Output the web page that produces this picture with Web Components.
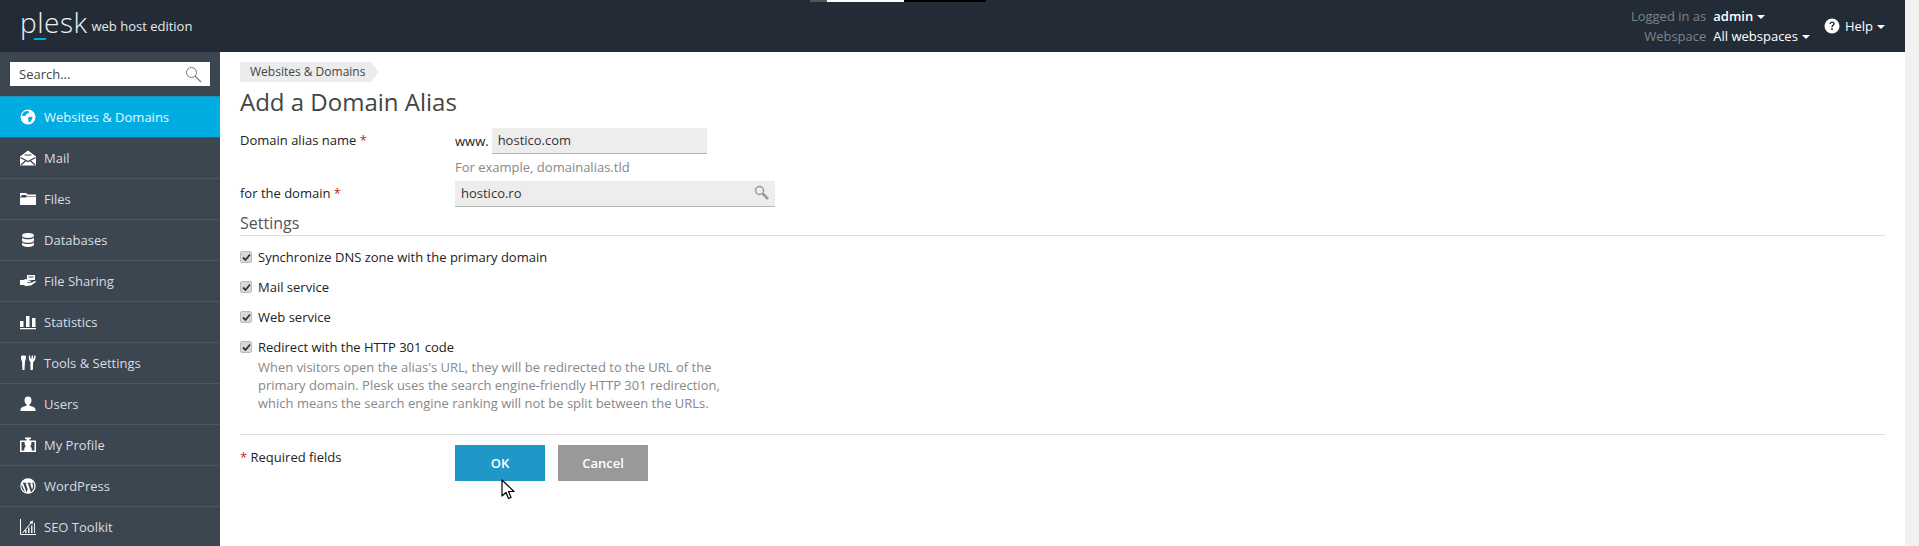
<!DOCTYPE html>
<html>
<head>
<meta charset="utf-8">
<title>Add a Domain Alias</title>
<style>
  html, body { margin: 0; height: 100%; overflow: hidden; background: #fff; }
  body { font: 13px/18px "Open Sans", sans-serif; color: #222; }
</style>
</head>
<body>
<plesk-app>
  <plesk-header></plesk-header>
  <plesk-sidebar slot="side"></plesk-sidebar>
  <plesk-form slot="main"></plesk-form>
</plesk-app>

<script>
const ICONS = {
  globe: '<circle cx="8" cy="8" r="7.5" fill="#fff"/><path d="M5 2.500c2-.8 3.500-.6 4 .3.500 1-1 1.600-2 2-1.200.5-.6 1.600-1.800 2C4 7.200 2.400 7 2 6c.4-1.500 1.600-3 3-3.500zM9 8c1.300-.5 3-.2 3.500.8.400 1-.8 1.700-1.300 2.700-.5 1-1.200 2-2.200 2-.8-.6-.4-1.800-.8-2.800C7.800 9.700 8 8.400 9 8z" fill="#00ade3"/>',
  mail: '<path d="M0 6.500 8 .5l8 6v9H0z" fill="#fff"/><path d="M.5 7.500 8 11.500l7.500-4M.8 15l5.200-4.500M15.200 15 10 10.500M4.500 5h7" fill="none" stroke="#3c4650" stroke-width="1.200"/>',
  folder: '<path d="M0 2h6l1.500 1.500H16v1.700H7L5.500 4H1.500v1.500H0z" fill="#fff"/><path d="M0 6.500h5.500L7 5.800h9V14H0z" fill="#fff"/>',
  db: '<path d="M2 3.500C2 1.800 4.500 1 8 1s6 .8 6 2.500S11.500 6 8 6 2 5.200 2 3.500zM2 5.800C3.200 7 5.500 7.300 8 7.300s4.800-.3 6-1.500v2.700C14 10 11.500 10.800 8 10.800S2 10 2 8.500zM2 10.600c1.200 1.200 3.500 1.500 6 1.500s4.800-.3 6-1.500v2C14 14.200 11.500 15 8 15s-6-.8-6-2.400z" fill="#fff"/>',
  share: '<path d="M7 2h8v5H7z" fill="#fff"/><path d="M8.500 3.500h5v1h-5z" fill="#3c4650"/><path d="M0 7h3l3-1 3 1.500h2.500L10 9H7v.8h4l4.500-1.800.5 1-5 3.500-5 .5L3 12H0z" fill="#fff"/>',
  stats: '<path d="M0 7h3.500v6H0zM6 2h3.500v11H6zM12 4h3.500v9H12zM0 14h16v1.200H0z" fill="#fff"/>',
  tools: '<path d="M1 1.500C1 .8 2 .5 3.500.5S6 .8 6 1.500c0 2-.2 3.500-1 5L4.500 15h-2L2 6.500c-.8-1.500-1-3-1-5zM9 .5h1.200l.3 3h1l.3-3H13l.3 3h.7l.2-3H15.500c.4 2.500-.2 5-2.300 6.500l-.4 8h-2.300L10.400 7C8.800 5.500 8.600 3 9 .5z" fill="#fff"/>',
  user: '<path d="M8 .5c2.300 0 3.500 1.700 3.500 3.800 0 1.700-.8 3.400-2 4.200v1.300c2.500.8 5.500 1.500 6 3.200v2H.5v-2c.5-1.700 3.500-2.400 6-3.200V8.500c-1.200-.8-2-2.500-2-4.200C4.500 2.200 5.700.5 8 .5z" fill="#fff"/>',
  profile: '<path d="M5 .5h6V2H9.500v1.500H16V15H0V3.500h6.500V2H5z" fill="#fff"/><path d="M1.500 5v8.500h2.800V11L5.800 9c-1-.7-1.200-2-1.200-3V5zM14.500 5v8.500h-2.800V11L10.200 9c1-.7 1.200-2 1.200-3V5z" fill="#3c4650"/>',
  wp: '<circle cx="8" cy="8" r="7.700" fill="#fff"/><path d="M1.700 6.500 5 14.200 2.800 12C1.800 10.800 1 8.200 1.700 6.500zM3 4.800h3.500v.6l-.8.2 2 6-1.200 3-3-8.600-.7-.2zM7.500 4.800H11v.6l-.9.2 2 6 .8-2.700c.4-1.400-.4-2.600-.5-3.300-.1-.8.300-1 .9-1.300 1 1.200 1.600 4.400.4 6.800L11 14.600 8.500 7l-.6-1.500-.4-.1z" fill="#3c4650"/>',
  seo: '<path d="M.5 0v15.500H16" fill="none" stroke="#fff" stroke-width="1"/><path d="M2.500 14 11 4" fill="none" stroke="#fff"/><path d="M9.500 3 13 1.500l-.5 4z" fill="#fff"/><path d="M5 14v-3h1.500v3zM8 14V8.500h1.500V14zM11 14V6.500h1.500V14zM14 14V4h1v10z" fill="#fff" opacity=".9"/>'
};

const MENU = [
  ['globe', 'Websites & Domains', true],
  ['mail', 'Mail'],
  ['folder', 'Files'],
  ['db', 'Databases'],
  ['share', 'File Sharing'],
  ['stats', 'Statistics'],
  ['tools', 'Tools & Settings'],
  ['user', 'Users'],
  ['profile', 'My Profile'],
  ['wp', 'WordPress'],
  ['seo', 'SEO Toolkit']
];

class PleskApp extends HTMLElement {
  constructor() {
    super();
    this.attachShadow({ mode: 'open' }).innerHTML = `
      <style>
        :host { display: block; height: 546px; position: relative; overflow: hidden; }
        .strip { display: flex; height: 2px; background: #232c36; padding-left: 810px; }
        .strip i { display: block; height: 2px; }
        .layout { display: grid; grid-template-columns: 220px 1fr; height: 544px; }
        .top { grid-column: 1 / 3; }
        .gutter { position: absolute; top: 0; right: 0; bottom: 0; width: 14px; background: #f1f1f1; }
      </style>
      <div class="strip">
        <i style="width:17px;background:#555"></i><i style="width:77px;background:#fff"></i><i style="width:82px;background:#000"></i>
      </div>
      <div class="layout">
        <div class="top"><slot></slot></div>
        <slot name="side"></slot>
        <slot name="main"></slot>
      </div>
      <div class="gutter"></div>`;
  }
}

class PleskHeader extends HTMLElement {
  constructor() {
    super();
    this.attachShadow({ mode: 'open' }).innerHTML = `
      <style>
        :host { display: flex; align-items: center; box-sizing: border-box; height: 50px; background: #232c36; color: #fff; padding: 0 14px 2px 20px; }
        .logo { display: flex; align-items: baseline; flex: 1; position: relative; height: 48px; }
        .plesk { font: 300 28px/40px "Open Sans", sans-serif; letter-spacing: .5px; color: #eef1f3; }
        .dash { position: absolute; left: 14px; top: 36px; width: 12px; height: 2px; background: #00ade3; }
        .edition { align-self: flex-start; margin: 15px 0 0 4px; font-size: 13px; color: #e6e9eb; }
        .user { display: grid; grid-template-columns: auto auto; column-gap: 7px; line-height: 20px; margin-right: 14px; }
        .user span:nth-child(odd) { color: #7d8489; text-align: right; }
        b { font-weight: 600; }
        .caret { display: inline-block; border: 4px solid transparent; border-top-color: #fff; border-bottom: 0; margin-left: 4px; vertical-align: 2px; }
        .help { display: flex; align-items: center; gap: 5px; margin-right: 20px; }
      </style>
      <div class="logo"><span class="plesk">plesk</span><span class="dash"></span><span class="edition">web host edition</span></div>
      <div class="user">
        <span>Logged in as</span><span><b>admin</b><i class="caret"></i></span>
        <span>Webspace</span><span>All webspaces<i class="caret"></i></span>
      </div>
      <div class="help">
        <svg width="16" height="16" viewBox="0 0 16 16"><circle cx="8" cy="8" r="7.500" fill="#fff"/><path d="M5.500 6c0-1.500 1.100-2.500 2.600-2.500S10.700 4.400 10.700 5.800c0 1.800-2 1.900-2 3.500H7.300c0-2.200 1.900-2.500 1.900-3.500 0-.6-.5-1-1.100-1-.7 0-1.100.5-1.200 1.200zM7.200 10.200h1.600v1.700H7.200z" fill="#232c36"/></svg>
        <span>Help<i class="caret"></i></span>
      </div>`;
  }
}

class NavItem extends HTMLElement {
  static get observedAttributes() { return ['icon']; }
  constructor() {
    super();
    this.attachShadow({ mode: 'open' }).innerHTML = `
      <style>
        :host { display: flex; align-items: center; gap: 8px; height: 40px; padding-left: 20px; color: #d9dde0; border-top: 1px solid #4d5761; }
        :host([active]) { background: #00ade3; color: #e8f8fd; border-top-color: #1a93bb; }
        svg { width: 16px; height: 16px; flex: none; }
      </style>
      <svg viewBox="0 0 16 16"></svg><span><slot></slot></span>`;
  }
  attributeChangedCallback(name, old, val) {
    this.shadowRoot.querySelector('svg').innerHTML = ICONS[val] || '';
  }
}

class PleskSidebar extends HTMLElement {
  constructor() {
    super();
    this.attachShadow({ mode: 'open' }).innerHTML = `
      <style>
        :host { display: block; background: #3c4650; height: 494px; overflow: hidden; }
        .search { display: flex; align-items: center; justify-content: space-between; height: 24px; margin: 10px; padding: 0 8px 0 9px; background: #fff; color: #444; }
      </style>
      <div class="search"><span>Search...</span>
        <svg width="17" height="17" viewBox="0 0 17 17" fill="none" stroke="#777"><circle cx="6.500" cy="6.500" r="5"/><path d="M10.200 10.200 16 16" stroke-width="1.200"/></svg>
      </div>
      <nav>${MENU.map(m => `<nav-item icon="${m[0]}"${m[2] ? ' active' : ''}>${m[1].replace('&', '&amp;')}</nav-item>`).join('')}</nav>`;
  }
}

class FormRow extends HTMLElement {
  constructor() {
    super();
    this.attachShadow({ mode: 'open' }).innerHTML = `
      <style>
        :host { display: grid; grid-template-columns: 215px 1fr; }
        .label { padding-top: 3px; }
        .req { color: #c8222a; }
      </style>
      <div class="label"><slot name="label"></slot> <span class="req">*</span></div>
      <div><slot></slot></div>`;
  }
}

class CheckRow extends HTMLElement {
  constructor() {
    super();
    this.attachShadow({ mode: 'open' }).innerHTML = `
      <style>
        :host { display: grid; grid-template-columns: 18px 1fr; margin-bottom: 12px; }
        .box { width: 10px; height: 10px; margin-top: 3px; background: #d8d8d8; border: 1px solid #bbb; border-radius: 2px; position: relative; }
        svg { position: absolute; left: 1px; top: 1px; }
      </style>
      <div class="box"><svg width="9" height="9" viewBox="0 0 9 9"><path d="M1 4.500 3.500 7 8 1.500" fill="none" stroke="#333" stroke-width="1.800"/></svg></div>
      <div><slot></slot></div>`;
  }
}

class PleskForm extends HTMLElement {
  constructor() {
    super();
    this.attachShadow({ mode: 'open' }).innerHTML = `
      <style>
        :host { display: block; padding: 10px 34px 0 20px; position: relative; color: #222; }
        .crumb { display: block; width: fit-content; height: 20px; line-height: 20px; padding: 0 13px 0 10px; background: #ececec; color: #444; font-size: 12px; clip-path: polygon(0 0, calc(100% - 7px) 0, 100% 50%, calc(100% - 7px) 100%, 0 100%); }
        h1 { font: 400 24px/32px "Open Sans", sans-serif; color: #444; margin: 4px 0 10px; }
        .www { display: flex; align-items: center; gap: 3px; }
        .input { display: flex; align-items: center; justify-content: space-between; height: 26px; box-sizing: border-box; padding: 0 6px 2px; background: #ededed; border-bottom: 1px solid #b5b5b5; color: #333; }
        .hint { color: #888; line-height: 18px; margin: 4px 0 5px; }
        h2 { font: 400 16px/20px "Open Sans", sans-serif; color: #555; margin: 6px 0 12px; padding-bottom: 2px; border-bottom: 1px solid #ddd; }
        .desc { color: #888; margin-top: 2px; }
        .foot { display: grid; grid-template-columns: 215px 1fr; border-top: 1px solid #ddd; margin-top: 22px; padding-top: 10px; }
        .foot > div:first-child { padding-top: 3px; }
        .btns { display: flex; gap: 13px; }
        button { all: unset; width: 90px; height: 36px; text-align: center; font: 600 13px/36px "Open Sans", sans-serif; color: #fff; background: #2196c9; }
        button.cancel { background: #999; }
        .req { color: #c8222a; }
        .cursor { position: absolute; left: 281px; top: 427px; }
      </style>
      <span class="crumb">Websites &amp; Domains</span>
      <h1>Add a Domain Alias</h1>
      <form-row><span slot="label">Domain alias name</span>
        <div class="www"><span>www.</span><div class="input" style="width:215px"><span>hostico.com</span></div></div>
        <div class="hint">For example, domainalias.tld</div>
      </form-row>
      <form-row><span slot="label">for the domain</span>
        <div class="input" style="width:320px"><span>hostico.ro</span>
          <svg width="15" height="15" viewBox="0 0 15 15" fill="none" stroke="#999"><circle cx="5.500" cy="5.500" r="4" stroke-width="1.500"/><path d="M8.500 8.500 14 14" stroke-width="2.500"/></svg>
        </div>
      </form-row>
      <h2>Settings</h2>
      <check-row>Synchronize DNS zone with the primary domain</check-row>
      <check-row>Mail service</check-row>
      <check-row>Web service</check-row>
      <check-row>Redirect with the HTTP 301 code
        <div class="desc">When visitors open the alias's URL, they will be redirected to the URL of the<br>primary domain. Plesk uses the search engine-friendly HTTP 301 redirection,<br>which means the search engine ranking will not be split between the URLs.</div>
      </check-row>
      <div class="foot">
        <div><span class="req">*</span> Required fields</div>
        <div class="btns"><button>OK</button><button class="cancel">Cancel</button></div>
      </div>
      <svg class="cursor" width="14" height="21" viewBox="0 0 14 21"><path d="M1 1v16l4-3.500 2.500 6 2.500-1-2.500-6H13z" fill="#fff" stroke="#000" stroke-width="1.200" stroke-linejoin="round"/></svg>`;
  }
}

customElements.define('plesk-app', PleskApp);
customElements.define('plesk-header', PleskHeader);
customElements.define('nav-item', NavItem);
customElements.define('plesk-sidebar', PleskSidebar);
customElements.define('form-row', FormRow);
customElements.define('check-row', CheckRow);
customElements.define('plesk-form', PleskForm);
</script>
</body>
</html>
